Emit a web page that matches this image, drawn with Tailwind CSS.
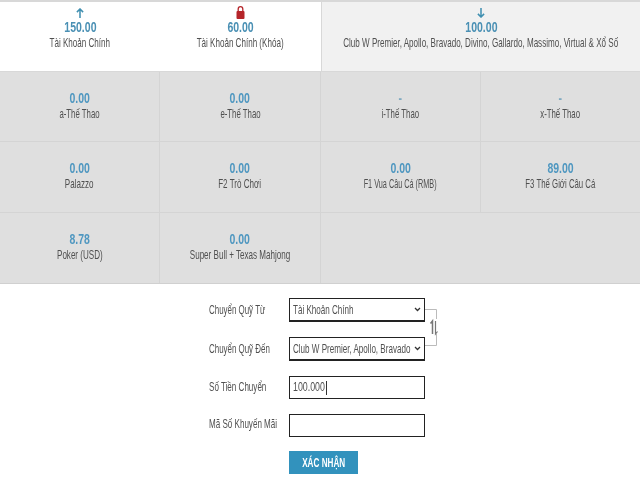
<!DOCTYPE html>
<html><head><meta charset="utf-8"><script src="https://cdn.jsdelivr.net/npm/@tailwindcss/browser@4"></script></head>
<body class="bg-white">
<div class="w-[640px] h-[480px] overflow-hidden bg-white text-[#505050] text-[13px] leading-[16px] font-['Liberation_Sans',sans-serif] blur-[0.35px] whitespace-nowrap">
  <div class="flex h-[72px] border-t-2 border-b border-[#d8d8d8]">
    <div class="w-[160px] shrink-0 flex flex-col items-center pt-[6px]">
      <svg class="w-[8px] h-[10px] mb-[1px]" viewBox="0 0 9 11" fill="none" stroke="#3f8fb0" stroke-width="1.700"><path d="M4.500 11V1M1 4.500L4.500 1 8 4.500"/></svg>
      <div class="text-[14px] leading-[16px] font-bold text-[#4a90b4] scale-x-[.75]">150.00</div>
      <div class="scale-x-[.62]">Tài Khoản Chính</div>
    </div>
    <div class="w-[161px] shrink-0 flex flex-col items-center pt-[4px]">
      <svg class="w-[9px] h-[13px]" viewBox="0 0 9 13" fill="#b5252a"><rect x="0.500" y="5" width="8" height="8" rx="1"/><path d="M2.200 5.500V3a2.300 2.300 0 0 1 4.600 0v2.500" fill="none" stroke="#b5252a" stroke-width="1.300"/></svg>
      <div class="text-[14px] leading-[16px] font-bold text-[#4a90b4] scale-x-[.75]">60.00</div>
      <div class="scale-x-[.62]">Tài Khoản Chính (Khóa)</div>
    </div>
    <div class="flex-1 min-w-0 flex flex-col items-center pt-[6px] bg-[#f1f1f1] border-l border-[#d8d8d8]">
      <svg class="w-[8px] h-[10px] mb-[1px]" viewBox="0 0 9 11" fill="none" stroke="#3f8fb0" stroke-width="1.700"><path d="M4.500 0v10M1 6.500L4.500 10 8 6.500"/></svg>
      <div class="text-[14px] leading-[16px] font-bold text-[#4a90b4] scale-x-[.75]">100.00</div>
      <div class="scale-x-[.62]">Club W Premier, Apollo, Bravado, Divino, Gallardo, Massimo, Virtual &amp; Xổ Số</div>
    </div>
  </div>
  <div class="grid grid-cols-[160px_161px_160px_159px] grid-rows-[70px_71px_70px] bg-[#dfdfdf] border-b border-[#d0d0d0]">
    <div class="flex flex-col items-center pt-[18px] border-r border-b border-[#d4d4d4]"><div class="text-[14px] leading-[16px] font-bold text-[#4f97c0] scale-x-[.75]">0.00</div><div class="scale-x-[.6]">a-Thế Thao</div></div>
    <div class="flex flex-col items-center pt-[18px] border-r border-b border-[#d4d4d4]"><div class="text-[14px] leading-[16px] font-bold text-[#4f97c0] scale-x-[.75]">0.00</div><div class="scale-x-[.6]">e-Thế Thao</div></div>
    <div class="flex flex-col items-center pt-[18px] border-r border-b border-[#d4d4d4]"><div class="text-[14px] leading-[16px] font-bold text-[#7fa9c0] scale-x-[.75]">-</div><div class="scale-x-[.6]">i-Thế Thao</div></div>
    <div class="flex flex-col items-center pt-[18px] border-b border-[#d4d4d4]"><div class="text-[14px] leading-[16px] font-bold text-[#7fa9c0] scale-x-[.75]">-</div><div class="scale-x-[.6]">x-Thế Thao</div></div>
    <div class="flex flex-col items-center pt-[18px] border-r border-b border-[#d4d4d4]"><div class="text-[14px] leading-[16px] font-bold text-[#4f97c0] scale-x-[.75]">0.00</div><div class="scale-x-[.62]">Palazzo</div></div>
    <div class="flex flex-col items-center pt-[18px] border-r border-b border-[#d4d4d4]"><div class="text-[14px] leading-[16px] font-bold text-[#4f97c0] scale-x-[.75]">0.00</div><div class="scale-x-[.62]">F2 Trò Chơi</div></div>
    <div class="flex flex-col items-center pt-[18px] border-r border-b border-[#d4d4d4]"><div class="text-[14px] leading-[16px] font-bold text-[#4f97c0] scale-x-[.75]">0.00</div><div class="scale-x-[.56]">F1 Vua Câu Cá (RMB)</div></div>
    <div class="flex flex-col items-center pt-[18px] border-b border-[#d4d4d4]"><div class="text-[14px] leading-[16px] font-bold text-[#4f97c0] scale-x-[.75]">89.00</div><div class="scale-x-[.6]">F3 Thế Giới Câu Cá</div></div>
    <div class="flex flex-col items-center pt-[18px] border-r border-[#d4d4d4]"><div class="text-[14px] leading-[16px] font-bold text-[#4f97c0] scale-x-[.75]">8.78</div><div class="scale-x-[.62]">Poker (USD)</div></div>
    <div class="flex flex-col items-center pt-[18px] border-r border-[#d4d4d4]"><div class="text-[14px] leading-[16px] font-bold text-[#4f97c0] scale-x-[.75]">0.00</div><div class="scale-x-[.62]">Super Bull + Texas Mahjong</div></div>
    <div class="col-span-2"></div>
  </div>
  <div class="relative flex flex-col gap-[15px] pl-[209px] pt-[14px]">
    <div class="flex items-center h-[24px]"><div class="w-[80px]"><span class="inline-block origin-left scale-x-[.61]">Chuyển Quỹ Từ</span></div><div class="w-[136px] h-[24px] border border-[#222] border-b-2 flex items-center justify-between pl-[3px] pr-[3px]"><span class="inline-block origin-left scale-x-[.62] mt-[1px]">Tài Khoản Chính</span><svg class="w-[7px] h-[5px]" viewBox="0 0 7 5" fill="none" stroke="#333" stroke-width="1.300"><path d="M1 1l2.500 2.500L6 1"/></svg></div></div>
    <div class="flex items-center h-[24px]"><div class="w-[80px]"><span class="inline-block origin-left scale-x-[.61]">Chuyển Quỹ Đến</span></div><div class="relative w-[136px] h-[24px] border border-[#222] border-b-2 flex items-center pl-[3px]"><span class="inline-block origin-left scale-x-[.62]">Club W Premier, Apollo, Bravado</span><svg class="absolute right-[3px] top-[8px] w-[7px] h-[5px]" viewBox="0 0 7 5" fill="none" stroke="#333" stroke-width="1.300"><path d="M1 1l2.500 2.500L6 1"/></svg></div></div>
    <div class="flex items-center h-[23px]"><div class="w-[80px] -mt-[1px]"><span class="inline-block origin-left scale-x-[.62]">Số Tiền Chuyển</span></div><div class="w-[136px] h-[23px] border border-[#222] flex items-center pl-[3px]"><span class="inline-block origin-left scale-x-[.68] -mt-[2px]">100.000</span><span class="-ml-[14px] w-px h-[14px] bg-[#333]"></span></div></div>
    <div class="flex items-center h-[23px]"><div class="w-[80px] -mt-[3px]"><span class="inline-block origin-left scale-x-[.62]">Mã Số Khuyến Mãi</span></div><div class="w-[136px] h-[23px] border border-[#222]"></div></div>
    <button class="ml-[80px] w-[69px] h-[23px] bg-[#3292bd] text-white text-[12px] font-bold text-center -mt-[1px]"><span class="inline-block scale-x-[.68]">XÁC NHẬN</span></button>
    <svg class="absolute left-[424px] top-[24px] w-[16px] h-[40px]" viewBox="0 0 16 40" fill="none" stroke="#bbb"><path d="M1 1.500H12.500V11M12.500 26V37.500H1"/><path d="M8.500 26V13L6.500 15.500" stroke="#777" stroke-width="1.500"/><path d="M11.500 13V26L13.500 23.500" stroke="#777" stroke-width="1.200"/></svg>
  </div>
</div>
</body></html>
